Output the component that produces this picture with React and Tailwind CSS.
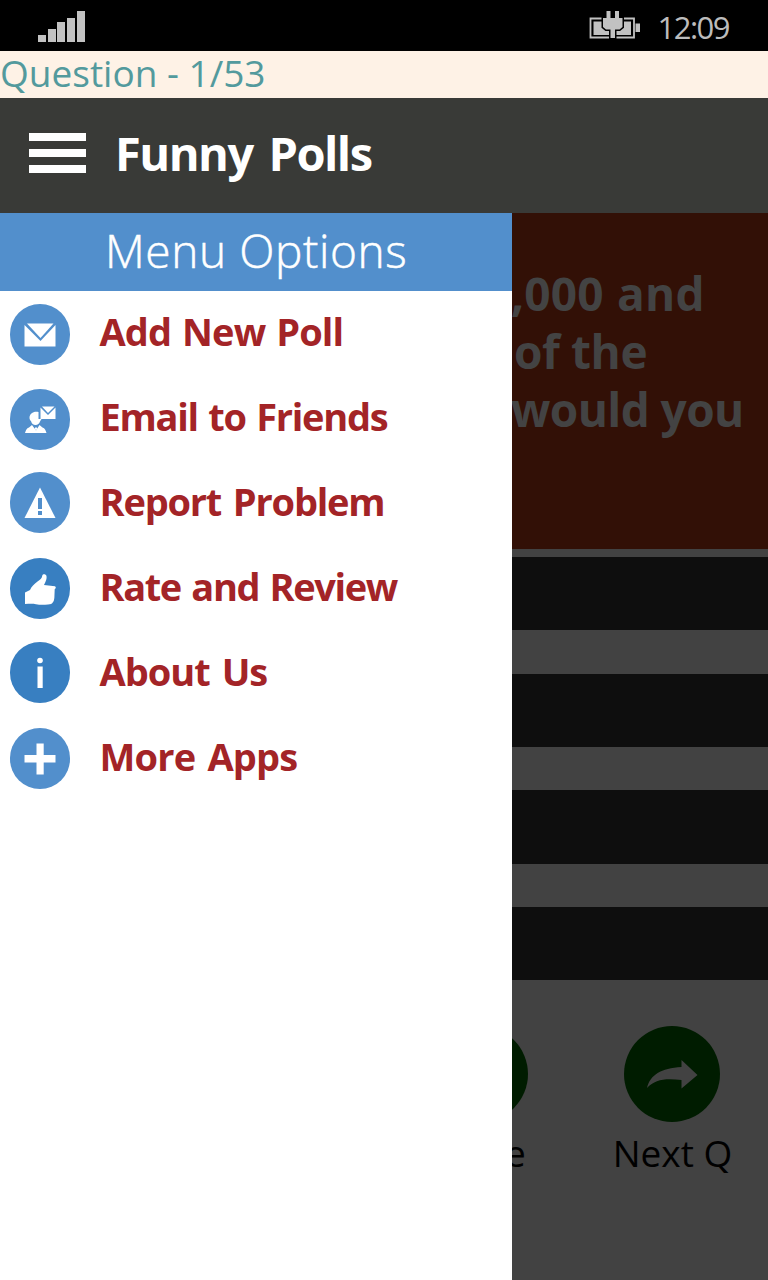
import React from 'react';

const font = "font-['Open_Sans','Noto_Sans',sans-serif]";

function Mail() {
  return (
    <svg viewBox="0 0 60 60" className="size-full">
      <path d="M14.500 20.500V42h31V20.500L30.500 36.600Z" fill="#fff" />
      <path d="M17 19h26.500L30.500 33.600Z" fill="#fff" />
    </svg>
  );
}

function Friend() {
  return (
    <svg viewBox="0 0 60 60" className="size-full" fill="#fff">
      <path d="M28.500 22.500c-5-1-9 1.500-9 6 0 1.500 1 2.500 1.700 3.500.5 2 2 3.500 4.300 3.500s3.800-1.500 4.500-3.500l1.500-2.500h-3Z" />
      <path d="M15 43.500c1-3 1.500-4.500 4-5.500l3-2.500 4 5.500 3.500-5.500 3 2.500c2.500 1 3 2.500 4 5.500Z" />
      <path d="M26 37.500l1.500 1.500-1.500 2-1.500-2Z" />
      <path d="M30.500 18v11.500h15V18L38 25.500Z" />
      <path d="M32 17h12.500L38 23.500Z" />
    </svg>
  );
}

function Warning() {
  return (
    <svg viewBox="0 0 60 60" className="size-full">
      <path d="M30 15L45.500 45.500H14.500Z" fill="#fff" />
      <path d="M28 25.500h4V36.500h-4ZM28 38.500h4v4h-4Z" fill="#528fcc" />
    </svg>
  );
}

function Thumb() {
  return (
    <svg viewBox="0 0 60 60" className="size-full">
      <path d="M15 34l5-2.500c1.500-3.500 4-6 7.500-8.500 2.500-1.700 4.500-3 4.800-6 .5-2 3.700-1.500 4.200.5.500 2.500-.5 5-2.500 9l11 1.200c1.200.8 1 2.300-.3 3l-.3 8c-.2 2.500-.7 4.300-1.500 5-.8 1.800-2.400 2-4.900 2.300-4 .3-8 .5-12-.3-3.500-.9-7-.4-11-.2Z" fill="#fff" />
    </svg>
  );
}

function Info() {
  return (
    <svg viewBox="0 0 60 60" className="size-full" fill="#fff">
      <circle cx="30" cy="18" r="2.800" />
      <path d="M27.500 24h5.200v21.500h-5.200Z" />
    </svg>
  );
}

function Plus() {
  return (
    <svg viewBox="0 0 60 60" className="size-full">
      <path d="M26.500 15h7.200v11.500H45.500v7.500H33.700V46h-7.200V34H14.500v-7.500h12Z" fill="#fff" />
    </svg>
  );
}

const items = [
  { label: 'Add New Poll', Icon: Mail, tone: 'bg-[#528fcc]', pad: 'pt-[13px]', track: 'tracking-[-0.9px] [word-spacing:2px]' },
  { label: 'Email to Friends', Icon: Friend, tone: 'bg-[#528fcc]', pad: 'pt-[13px]', track: 'tracking-[-1.3px] [word-spacing:2px]' },
  { label: 'Report Problem', Icon: Warning, tone: 'bg-[#528fcc]', pad: 'pt-[11px]', track: 'tracking-[-1.2px] [word-spacing:3px]' },
  { label: 'Rate and Review', Icon: Thumb, tone: 'bg-[#387fc1]', pad: 'pt-[12px]', track: 'tracking-[-1.4px] [word-spacing:2px]' },
  { label: 'About Us', Icon: Info, tone: 'bg-[#387fc1]', pad: 'pt-[10.500px]', track: 'tracking-[-1px] [word-spacing:3px]' },
  { label: 'More Apps', Icon: Plus, tone: 'bg-[#528fcc]', pad: 'pt-[12px]', track: 'tracking-[-0.8px] [word-spacing:3px]' },
];

function StatusBar() {
  return (
    <div className="flex h-[51px] shrink-0 justify-between bg-black">
      <div className="flex h-[42px] items-end gap-[1.7px] pl-[38px]">
        <i className="h-[7px] w-2 bg-[#c2c2c2]" />
        <i className="h-[13px] w-2 bg-[#c2c2c2]" />
        <i className="h-5 w-2 bg-[#c2c2c2]" />
        <i className="h-6 w-2 bg-[#c2c2c2]" />
        <i className="h-[31px] w-2 bg-[#c2c2c2]" />
      </div>
      <div className="flex pr-[39px]">
        <svg viewBox="0 0 52 30" className="mt-[10px] h-[30px] w-[52px]">
          <path d="M1.500 8.500h43.500v19h-43.500Z" fill="none" stroke="#c2c2c2" strokeWidth="1.800" />
          <path d="M4.500 11.500h37.500v13.500H4.500ZM46.500 13.500h4.500v8.500h-4.500Z" fill="#c2c2c2" />
          <path d="M17.500 1h4v7h4.500V1h4v7h3.500v9l-3 2.500h-4.500V28h-4.500v-8.500h-4.500l-3-2.500V8h3.500Z" fill="#c2c2c2" stroke="#000" strokeWidth="3" paintOrder="stroke" />
        </svg>
        <span className="ml-[16px] mt-[5px] whitespace-nowrap text-[31px] leading-[44px] tracking-[-1.5px] text-[#bcbcbc]">12:09</span>
      </div>
    </div>
  );
}

function Drawer() {
  return (
    <aside className="w-[512px] shrink-0 bg-white">
      <h2 className="h-[78px] whitespace-nowrap bg-[#528fcc] pl-[105px] text-[46px] font-light leading-[75px] tracking-[0.6px] text-white [-webkit-text-stroke:0.5px_white]">Menu Options</h2>
      <ul>
        {items.map(({ label, Icon, tone, pad, track }) => (
          <li key={label} className="flex h-[85px] pl-[10px]">
            <div className={pad}>
              <div className={'h-[61px] w-[60px] overflow-hidden rounded-full ' + tone}>
                <Icon />
              </div>
            </div>
            <span className={'ml-[29.500px] whitespace-nowrap text-[38px] font-bold leading-[81px] text-[#a32427] ' + track}>{label}</span>
          </li>
        ))}
      </ul>
    </aside>
  );
}

function Backdrop() {
  return (
    <div className="flex w-[256px] flex-col overflow-hidden bg-[#424242]">
      <div className="h-[336px] shrink-0 bg-[#321006] pt-[51px] text-[46px] font-bold leading-[58px] text-[#434343]">
        <p className="-ml-px whitespace-nowrap tracking-[0.2px] [word-spacing:1px]">,000 and</p>
        <p className="whitespace-nowrap pl-[2px] tracking-[-0.4px]">of the</p>
        <p className="-ml-px whitespace-nowrap tracking-[-0.6px]">would you</p>
      </div>
      <div className="flex flex-col gap-[43.500px] pt-2">
        <div className="h-[73.200px] bg-[#0e0e0e]" />
        <div className="h-[73.200px] bg-[#0e0e0e]" />
        <div className="h-[73.200px] bg-[#0e0e0e]" />
        <div className="h-[73.200px] bg-[#0e0e0e]" />
      </div>
      <div className="flex pt-[45.500px] text-[37px] leading-[50px] text-black">
        <div className="flex w-[96px] flex-col">
          <div className="-ml-20 size-24 rounded-full bg-[#001c00]" />
          <span className="-ml-[7px] mt-[6px]">e</span>
        </div>
        <div className="flex w-[128px] flex-col items-center">
          <div className="size-24 rounded-full bg-[#001c00]">
            <svg viewBox="0 0 96 96" className="size-full">
              <path d="M23 62C26 49 37 42 57.500 41V34L73.500 49 57.500 62.500V54C42 52 31 53 23 62Z" fill="#424242" />
            </svg>
          </div>
          <span className="ml-px mt-[6px] whitespace-nowrap">Next Q</span>
        </div>
      </div>
    </div>
  );
}

export default function App() {
  return (
    <div className={'flex h-[1280px] w-[768px] flex-col overflow-hidden ' + font}>
      <StatusBar />
      <div className="h-[47px] shrink-0 whitespace-nowrap bg-[#fef2e6] text-[37px] leading-[44px] text-[#539a9d]">Question - 1/53</div>
      <header className="flex h-[115px] shrink-0 bg-[#393a37]">
        <div className="ml-[29px] flex w-[57px] flex-col gap-2 pt-[35px]">
          <i className="h-2 bg-white" />
          <i className="h-2 bg-white" />
          <i className="h-2 bg-white" />
        </div>
        <h1 className="ml-[29px] whitespace-nowrap text-[47px] font-bold leading-[111px] tracking-[-1.5px] text-white [word-spacing:5px]">Funny Polls</h1>
      </header>
      <main className="flex flex-1">
        <Drawer />
        <Backdrop />
      </main>
    </div>
  );
}
